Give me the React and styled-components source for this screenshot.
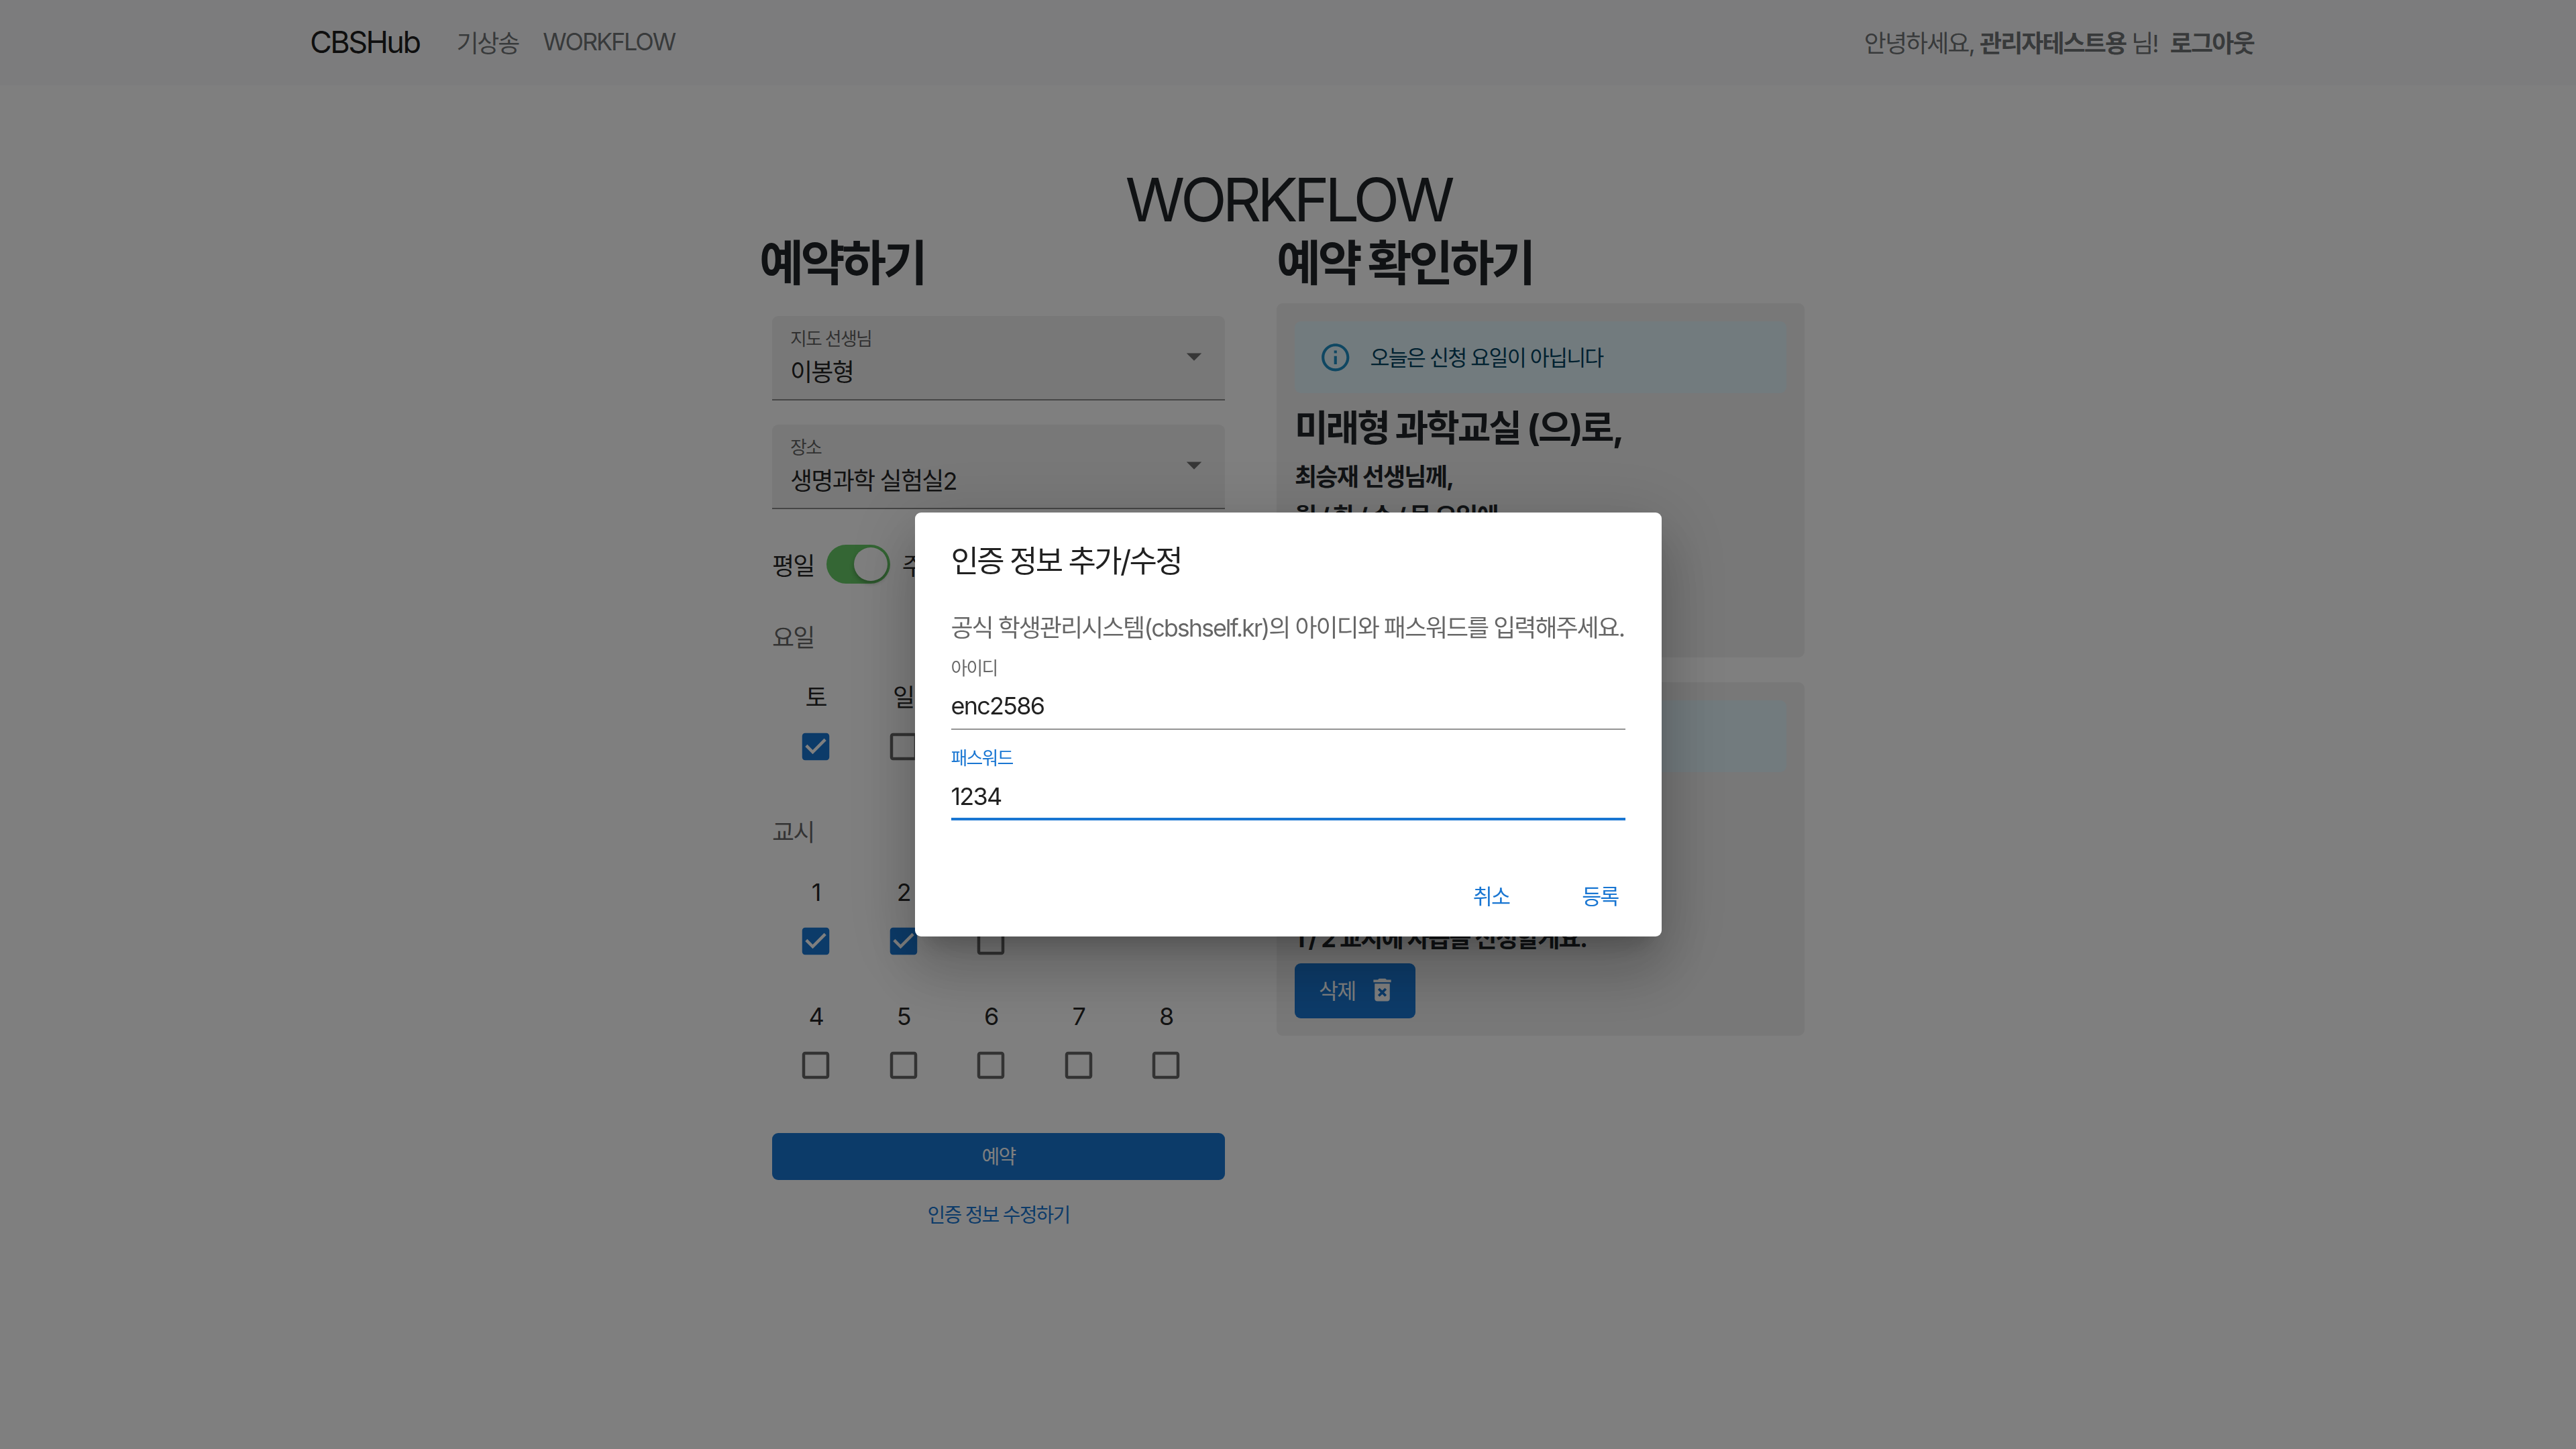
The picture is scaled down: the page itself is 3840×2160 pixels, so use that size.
import styled, { createGlobalStyle } from 'styled-components'

const GlobalStyle = createGlobalStyle`
  html, body {
    margin: 0;
    padding: 0;
    background: #fff;
    color: #212529;
    font-family: Inter, "Noto Sans CJK KR", sans-serif;
    font-size: 36px;
    letter-spacing: -0.05em;
  }
  * { box-sizing: border-box; }
`

const Navbar = styled.nav`
  height: 127px;
  background: #f8f9fa;
  display: flex;
  align-items: center;
  justify-content: space-between;
  padding: 0 480px 3px 462px;
`

const NavGroup = styled.div`
  display: flex;
  align-items: center;
`

const Brand = styled.a`
  font-size: 45px;
  letter-spacing: -0.057em;
  color: rgba(0, 0, 0, 0.9);
  margin-right: 55px;
`

const NavLink = styled.a`
  font-size: 36px;
  letter-spacing: -0.06em;
  color: rgba(33, 37, 41, 0.65);
  margin-right: 36px;
`

const Greeting = styled.span`
  font-size: 36px;
  letter-spacing: -0.055em;
  color: rgba(33, 37, 41, 0.65);
  margin-right: 18px;

  b { font-weight: 700; }
`

const Logout = styled.a`
  font-size: 36px;
  font-weight: 700;
  color: rgba(33, 37, 41, 0.65);
`

const Main = styled.main`
  display: flex;
  flex-direction: column;
`

const PageTitle = styled.h1`
  margin: 117px 0 0;
  font-size: 90px;
  line-height: 108px;
  font-weight: 400;
  letter-spacing: -0.069em;
  text-align: center;
`

const Columns = styled.div`
  margin: -3px 0 0 1132px;
  display: grid;
  grid-template-columns: 771px 787px;
`

const Heading = styled.h2`
  margin: 0;
  font-size: 72px;
  line-height: 86px;
  font-weight: 700;
  letter-spacing: -0.065em;
`

const Form = styled.form`
  width: 675px;
  margin: 36px 0 0 19px;
  display: flex;
  flex-direction: column;
`

const SelectBox = styled.div`
  height: 126px;
  margin-bottom: 36px;
  padding: 0 27px 0 27px;
  display: flex;
  align-items: center;
  justify-content: space-between;
  background: rgba(0, 0, 0, 0.06);
  border-bottom: 2.25px solid rgba(0, 0, 0, 0.42);
  border-radius: 9px 9px 0 0;
`

const SelectText = styled.div`
  padding-top: 4px;
  display: flex;
  flex-direction: column;
`

const SelectLabel = styled.span`
  font-size: 27px;
  line-height: 38px;
  color: rgba(0, 0, 0, 0.6);
`

const SelectValue = styled.span`
  font-size: 36px;
  line-height: 56px;
  padding-top: 2px;
  color: rgba(0, 0, 0, 0.87);
`

const ArrowIcon = styled.svg`
  width: 54px;
  height: 54px;
  margin: -4px -8px 0 0;
  fill: rgba(0, 0, 0, 0.54);
`

const ToggleRow = styled.div`
  margin: 17px 0 54px;
  height: 58px;
  display: flex;
  align-items: center;
  gap: 18px;
  font-size: 36px;
  color: rgba(0, 0, 0, 0.87);
`

const SwitchTrack = styled.span`
  width: 95px;
  height: 58px;
  padding: 4px;
  border-radius: 29px;
  background: #68cc68;
  display: flex;
  justify-content: flex-end;
`

const SwitchThumb = styled.span`
  width: 50px;
  height: 50px;
  border-radius: 50%;
  background: #fff;
  box-shadow: 0 4px 6px rgba(0, 0, 0, 0.25);
`

const GroupLabel = styled.div`
  font-size: 36px;
  line-height: 54px;
  color: rgba(0, 0, 0, 0.6);
  margin-bottom: 35px;
`

const CheckGrid = styled.div`
  display: grid;
  grid-template-columns: repeat(5, 130.5px);
  row-gap: 37px;
  margin-bottom: 53px;
`

const CheckCell = styled.div`
  display: flex;
  flex-direction: column;
  align-items: center;
  grid-column-start: ${({ $rowStart }) => ($rowStart ? 1 : 'auto')};
`

const CheckName = styled.span`
  font-size: 36px;
  line-height: 54px;
  color: rgba(0, 0, 0, 0.87);
`

const CheckIcon = styled.svg`
  width: 54px;
  height: 54px;
  margin: 19px 20px 21px;
  fill: ${({ $checked }) => ($checked ? '#1976d2' : 'rgba(0, 0, 0, 0.6)')};
`

const SubmitButton = styled.button`
  height: 70px;
  padding: 0 0 5px;
  border: 0;
  border-radius: 9px;
  background: #1976d2;
  color: #fff;
  font-family: inherit;
  font-size: 29px;
  letter-spacing: inherit;
`

const EditLink = styled.a`
  margin-top: 34px;
  font-size: 29px;
  line-height: 38px;
  text-align: center;
  color: #1976d2;
`

const Bookings = styled.div`
  margin-top: 17px;
  display: flex;
  flex-direction: column;
  gap: 37px;
`

const Card = styled.section`
  height: 527.5px;
  padding: 27px;
  border-radius: 9px;
  background: rgba(0, 0, 0, 0.06);
`

const Alert = styled.div`
  height: 107px;
  padding: 0 36px 3px;
  display: flex;
  align-items: center;
  gap: 27px;
  border-radius: 9px;
  background: #e5f6fd;
  font-size: 31.5px;
  letter-spacing: -0.058em;
  color: #014361;
`

const InfoIcon = styled.svg`
  width: 49.5px;
  height: 49.5px;
  margin-top: 3px;
  fill: #1f8ec4;
`

const Place = styled.h4`
  margin: 21px 0 0;
  font-size: 54px;
  line-height: 64px;
  font-weight: 700;
  letter-spacing: -0.057em;
`

const BookingLine = styled.p`
  margin: ${({ $gap }) => $gap}px 0 0;
  font-size: 36px;
  line-height: 54px;
  font-weight: 700;
`

const DeleteButton = styled.button`
  margin-top: 10px;
  height: 82px;
  padding: 0 36px 3px;
  display: flex;
  align-items: center;
  border: 0;
  border-radius: 9px;
  background: #1976d2;
  color: #fff;
  font-family: inherit;
  font-size: 31.5px;
  letter-spacing: inherit;
`

const DeleteIcon = styled.svg`
  width: 45px;
  height: 45px;
  margin: 0 -9px 0 18px;
  fill: currentColor;
`

const Backdrop = styled.div`
  position: fixed;
  inset: 0;
  display: flex;
  align-items: center;
  justify-content: center;
  background: rgba(0, 0, 0, 0.5);
`

const Dialog = styled.div`
  width: 1113px;
  height: 632px;
  padding: 0 54px;
  display: flex;
  flex-direction: column;
  border-radius: 9px;
  background: #fff;
  box-shadow: 0 25px 34px -16px rgba(0, 0, 0, 0.2),
    0 54px 86px 7px rgba(0, 0, 0, 0.14), 0 20px 104px 18px rgba(0, 0, 0, 0.12);
`

const DialogTitle = styled.h2`
  margin: 39px 0 0;
  font-size: 45px;
  line-height: 68px;
  font-weight: 400;
  letter-spacing: -0.059em;
  color: rgba(0, 0, 0, 0.87);
`

const DialogText = styled.p`
  margin: 38px 0 0;
  font-size: 36px;
  line-height: 54px;
  letter-spacing: -0.057em;
  white-space: nowrap;
  color: rgba(0, 0, 0, 0.6);
`

const Field = styled.div`
  margin-top: ${({ $gap }) => $gap}px;
  display: flex;
  flex-direction: column;
`

const FieldLabel = styled.label`
  font-size: 27px;
  line-height: 32px;
  color: ${({ $focused }) => ($focused ? '#1976d2' : 'rgba(0, 0, 0, 0.6)')};
`

const FieldValue = styled.div`
  height: ${({ $focused }) => ($focused ? 76 : 75)}px;
  padding-top: ${({ $focused }) => ($focused ? 13 : 12)}px;
  font-size: 36px;
  line-height: 54px;
  color: rgba(0, 0, 0, 0.87);
  border-bottom: ${({ $focused }) =>
    $focused ? '4.5px solid #1976d2' : '2.25px solid rgba(0, 0, 0, 0.42)'};
`

const DialogActions = styled.div`
  margin-top: auto;
  padding: 0 10px 36px 0;
  display: flex;
  justify-content: flex-end;
  gap: 108px;
`

const TextButton = styled.button`
  padding: 0;
  border: 0;
  background: none;
  color: #1976d2;
  font-family: inherit;
  font-size: 31.5px;
  letter-spacing: inherit;
  line-height: 46px;
`

const ICON_BLANK =
  'M19 5v14H5V5h14m0-2H5c-1.1 0-2 .9-2 2v14c0 1.1.9 2 2 2h14c1.1 0 2-.9 2-2V5c0-1.1-.9-2-2-2z'
const ICON_CHECKED =
  'M19 3H5c-1.11 0-2 .9-2 2v14c0 1.1.89 2 2 2h14c1.11 0 2-.9 2-2V5c0-1.1-.89-2-2-2zm-9 14l-5-5 1.41-1.41L10 14.17l7.59-7.59L19 8l-9 9z'

const days = [
  { name: '토', checked: true },
  { name: '일', checked: false }
]

const periods = [1, 2, 3, 4, 5, 6, 7, 8].map(n => ({
  name: String(n),
  checked: n < 3,
  rowStart: n === 4
}))

const Check = ({ name, checked, rowStart }) => (
  <CheckCell $rowStart={rowStart}>
    <CheckName>{name}</CheckName>
    <CheckIcon $checked={checked} viewBox="0 0 24 24">
      <path d={checked ? ICON_CHECKED : ICON_BLANK} />
    </CheckIcon>
  </CheckCell>
)

const Select = ({ label, value }) => (
  <SelectBox>
    <SelectText>
      <SelectLabel>{label}</SelectLabel>
      <SelectValue>{value}</SelectValue>
    </SelectText>
    <ArrowIcon viewBox="0 0 24 24">
      <path d="M7 10l5 5 5-5z" />
    </ArrowIcon>
  </SelectBox>
)

const Booking = () => (
  <Card>
    <Alert>
      <InfoIcon viewBox="0 0 24 24">
        <path d="M11 7h2v2h-2zm0 4h2v6h-2zm1-9C6.48 2 2 6.48 2 12s4.48 10 10 10 10-4.48 10-10S17.52 2 12 2zm0 18c-4.41 0-8-3.59-8-8s3.59-8 8-8 8 3.59 8 8-3.59 8-8 8z" />
      </InfoIcon>
      오늘은 신청 요일이 아닙니다
    </Alert>
    <Place>미래형 과학교실 (으)로,</Place>
    <BookingLine $gap={13}>최승재 선생님께,</BookingLine>
    <BookingLine $gap={5}>월 / 화 / 수 / 목 요일에</BookingLine>
    <BookingLine $gap={10}>1 / 2 교시에 자습을 신청할게요.</BookingLine>
    <DeleteButton type="button">
      삭제
      <DeleteIcon viewBox="0 0 24 24">
        <path d="M6 19c0 1.1.9 2 2 2h8c1.1 0 2-.9 2-2V7H6v12zm2.46-7.12 1.41-1.41L12 12.59l2.12-2.12 1.41 1.41L13.41 14l2.12 2.12-1.41 1.41L12 15.41l-2.12 2.12-1.41-1.41L10.59 14l-2.13-2.12zM15.5 4l-1-1h-5l-1 1H5v2h14V4z" />
      </DeleteIcon>
    </DeleteButton>
  </Card>
)

export default function App() {
  return (
    <>
      <GlobalStyle />
      <Navbar>
        <NavGroup>
          <Brand>CBSHub</Brand>
          <NavLink>기상송</NavLink>
          <NavLink>WORKFLOW</NavLink>
        </NavGroup>
        <NavGroup>
          <Greeting>
            안녕하세요, <b>관리자테스트용</b> 님!
          </Greeting>
          <Logout>로그아웃</Logout>
        </NavGroup>
      </Navbar>

      <Main>
        <PageTitle>WORKFLOW</PageTitle>
        <Columns>
          <div>
            <Heading>예약하기</Heading>
            <Form>
              <Select label="지도 선생님" value="이봉형" />
              <Select label="장소" value="생명과학 실험실2" />
              <ToggleRow>
                평일
                <SwitchTrack>
                  <SwitchThumb />
                </SwitchTrack>
                주말
              </ToggleRow>
              <GroupLabel>요일</GroupLabel>
              <CheckGrid>
                {days.map(day => (
                  <Check key={day.name} {...day} />
                ))}
              </CheckGrid>
              <GroupLabel>교시</GroupLabel>
              <CheckGrid>
                {periods.map(period => (
                  <Check key={period.name} {...period} />
                ))}
              </CheckGrid>
              <SubmitButton type="button">예약</SubmitButton>
              <EditLink>인증 정보 수정하기</EditLink>
            </Form>
          </div>
          <div>
            <Heading>예약 확인하기</Heading>
            <Bookings>
              <Booking />
              <Booking />
            </Bookings>
          </div>
        </Columns>
      </Main>

      <Backdrop>
        <Dialog>
          <DialogTitle>인증 정보 추가/수정</DialogTitle>
          <DialogText>
            공식 학생관리시스템(cbshself.kr)의 아이디와 패스워드를 입력해주세요.
          </DialogText>
          <Field $gap={18}>
            <FieldLabel>아이디</FieldLabel>
            <FieldValue>enc2586</FieldValue>
          </Field>
          <Field $gap={27}>
            <FieldLabel $focused>패스워드</FieldLabel>
            <FieldValue $focused>1234</FieldValue>
          </Field>
          <DialogActions>
            <TextButton type="button">취소</TextButton>
            <TextButton type="button">등록</TextButton>
          </DialogActions>
        </Dialog>
      </Backdrop>
    </>
  )
}
